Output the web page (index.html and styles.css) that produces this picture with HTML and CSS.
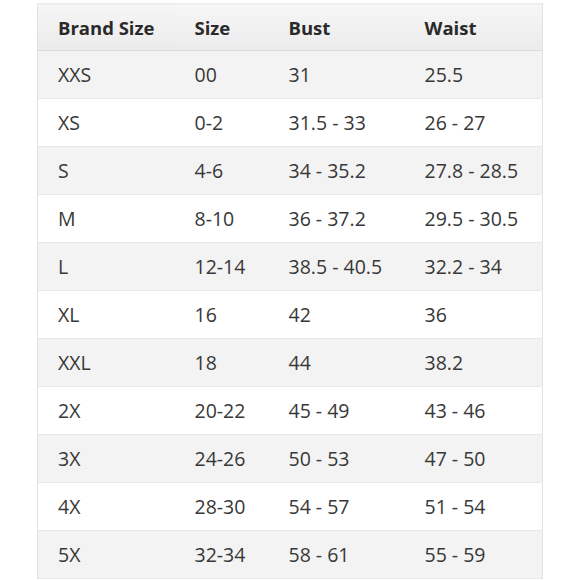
FILE: index.html
```html
<!DOCTYPE html>
<html>
<head>
<meta charset="utf-8">
<link rel="stylesheet" href="styles.css">
</head>
<body>
<table class="size-chart">
  <colgroup>
    <col class="c1"><col class="c2"><col class="c3"><col class="c4">
  </colgroup>
  <thead>
    <tr><th>Brand Size</th><th>Size</th><th>Bust</th><th>Waist</th></tr>
  </thead>
  <tbody>
    <tr><td>XXS</td><td>00</td><td>31</td><td>25.5</td></tr>
    <tr><td>XS</td><td>0-2</td><td>31.5 - 33</td><td>26 - 27</td></tr>
    <tr><td>S</td><td>4-6</td><td>34 - 35.2</td><td>27.8 - 28.5</td></tr>
    <tr><td>M</td><td>8-10</td><td>36 - 37.2</td><td>29.5 - 30.5</td></tr>
    <tr><td>L</td><td>12-14</td><td>38.5 - 40.5</td><td>32.2 - 34</td></tr>
    <tr><td>XL</td><td>16</td><td>42</td><td>36</td></tr>
    <tr><td>XXL</td><td>18</td><td>44</td><td>38.2</td></tr>
    <tr><td>2X</td><td>20-22</td><td>45 - 49</td><td>43 - 46</td></tr>
    <tr><td>3X</td><td>24-26</td><td>50 - 53</td><td>47 - 50</td></tr>
    <tr><td>4X</td><td>28-30</td><td>54 - 57</td><td>51 - 54</td></tr>
    <tr><td>5X</td><td>32-34</td><td>58 - 61</td><td>55 - 59</td></tr>
  </tbody>
</table>
</body>
</html>
```
FILE: styles.css
```css
html, body {
  margin: 0;
  padding: 0;
  background: #ffffff;
}
body {
  padding: 3px 0 0 37px;
  font-family: "Open Sans", "Noto Sans", sans-serif;
  color: #333333;
}
.size-chart {
  width: 505px;
  border-collapse: collapse;
  table-layout: fixed;
  border-left: 1px solid #e2e2e2;
  border-right: 1px solid #e2e2e2;
  border-top: 1px solid #ececec;
}
.c1 { width: 137px; }
.c2 { width: 94px; }
.c3 { width: 136px; }
.c4 { width: 138px; }
.size-chart th,
.size-chart td {
  padding: 0 0 0 20px;
  text-align: left;
  vertical-align: middle;
  white-space: nowrap;
}
.size-chart th {
  height: 46px;
  font-size: 18.5px;
  font-weight: 700;
  color: #2a2a2a;
  background: linear-gradient(#f6f6f6, #ebebeb);
  border-bottom: 1px solid #dcdcdc;
}
.size-chart td {
  height: 47px;
  font-size: 19.5px;
  font-weight: 400;
  color: #383838;
  border-bottom: 1px solid #e8e8e8;
}
.size-chart tbody tr:nth-child(odd) td {
  background: #f3f3f3;
}
.size-chart tbody tr:nth-child(even) td {
  background: #ffffff;
}
```
